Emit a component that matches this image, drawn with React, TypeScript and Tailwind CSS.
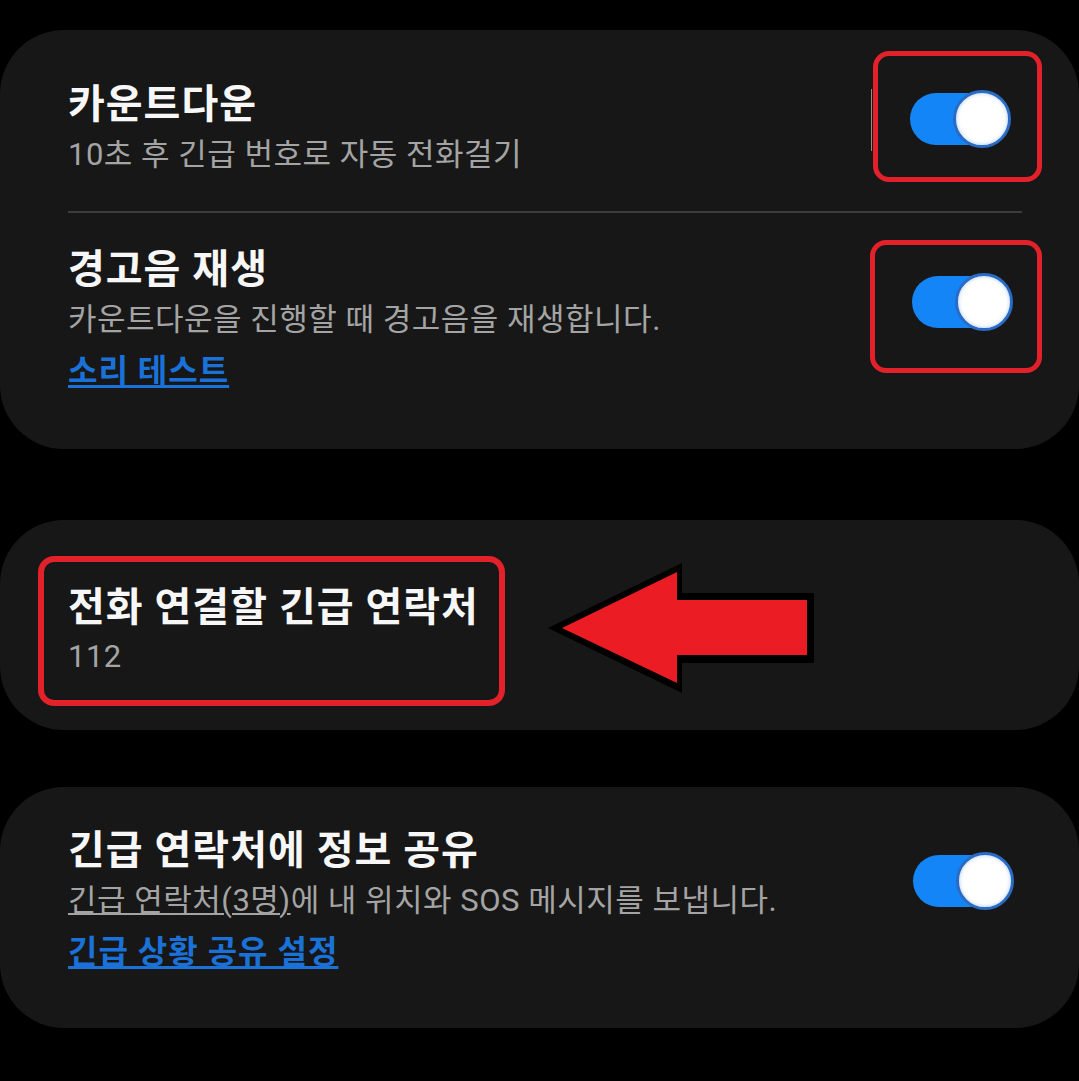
import React from "react";

const FONT = "font-['Roboto','Noto_Sans_CJK_KR',sans-serif]";

function Switch() {
  return (
    <div className="relative h-[58px] w-[101px] shrink-0">
      <div className="absolute left-0 top-[3px] h-[52px] w-[92px] rounded-full bg-[#1485f6]" />
      <div className="absolute right-0 top-0 h-[58px] w-[58px] rounded-full border-[3px] border-[#2a6bc6] bg-white shadow-[inset_0_0_4px_rgba(120,170,230,0.6)]" />
    </div>
  );
}

function Title({ children }: { children: React.ReactNode }) {
  return <div className="text-[40px] font-bold leading-[48px] tracking-[1px] text-[#f7f7f7]">{children}</div>;
}

function Sub({ children, className = "" }: { children: React.ReactNode; className?: string }) {
  return <div className={`text-[31px] leading-[40px] tracking-[0.5px] text-[#a4a4a4] ${className}`}>{children}</div>;
}

function Arrow() {
  // page coords: x 548..814, y 563..693
  return (
    <svg width="266" height="130" viewBox="548 563 266 130" className="shrink-0">
      <polygon points="548,628 682,563 682,593 814,593 814,663 682,663 682,693" fill="#000" />
      <polygon points="562,628 677,572 677,600 807,600 807,655 677,655 677,683" fill="#ec1c24" />
    </svg>
  );
}

export default function App() {
  return (
    <div className={`min-h-[1081px] w-full bg-black pt-[30px] ${FONT}`}>
      {/* Countdown + alarm */}
      <div className="h-[419px] rounded-[64px] bg-[#171717]">
        <div className="flex h-[181px] items-start pl-[68px] pr-[37px]">
          <div className="flex-1 pt-[51px]">
            <Title>카운트다운</Title>
            <Sub className="mt-[6px]">10초 후 긴급 번호로 자동 전화걸기</Sub>
          </div>
          <div className="mr-px mt-[59px] h-[62px] w-px bg-[#8f8f8f]" />
          <div className="mt-[21px] h-[131px] w-[169px] rounded-[16px] border-[5px] border-[#e3212b] pl-[32px] pt-[34px]">
            <Switch />
          </div>
        </div>
        <div className="ml-[68px] mr-[57px] h-[2px] bg-[#3c3c3c]" />
        <div className="flex items-start pl-[68px] pr-[37px]">
          <div className="flex-1 pt-[33px]">
            <Title>경고음 재생</Title>
            <Sub className="mt-[6px]">카운트다운을 진행할 때 경고음을 재생합니다.</Sub>
            <div className="mt-[11px] text-[32px] font-bold leading-[40px] tracking-[1px] text-[#1a72d8] underline decoration-[3px] underline-offset-[3px]">
              소리 테스트
            </div>
          </div>
          <div className="mt-[27px] h-[133px] w-[172px] rounded-[16px] border-[5px] border-[#e3212b] pl-[37px] pt-[28px]">
            <Switch />
          </div>
        </div>
      </div>

      {/* Emergency number */}
      <div className="mt-[71px] flex h-[210px] items-start rounded-[64px] bg-[#171717] pl-[38px]">
        <div className="mt-[36px] h-[150px] w-[467px] shrink-0 rounded-[16px] border-[6px] border-[#e3212b] pl-[24px] pt-[22px]">
          <Title>전화 연결할 긴급 연락처</Title>
          <Sub className="mt-[5px]">112</Sub>
        </div>
        <div className="ml-[43px] mt-[43px]">
          <Arrow />
        </div>
      </div>

      {/* Share info */}
      <div className="mt-[57px] flex h-[241px] items-start rounded-[64px] bg-[#171717] pl-[68px] pr-[65px]">
        <div className="flex-1 pt-[40px]">
          <Title>긴급 연락처에 정보 공유</Title>
          <Sub className="mt-[6px]">
            <span className="underline decoration-[2px] underline-offset-[2px]">긴급 연락처(3명)</span>에 내 위치와 SOS 메시지를 보냅니다.
          </Sub>
          <div className="mt-[11px] text-[32px] font-bold leading-[40px] tracking-[1px] text-[#1a72d8] underline decoration-[3px] underline-offset-[3px]">
            긴급 상황 공유 설정
          </div>
        </div>
        <div className="mt-[65px]">
          <Switch />
        </div>
      </div>
    </div>
  );
}
